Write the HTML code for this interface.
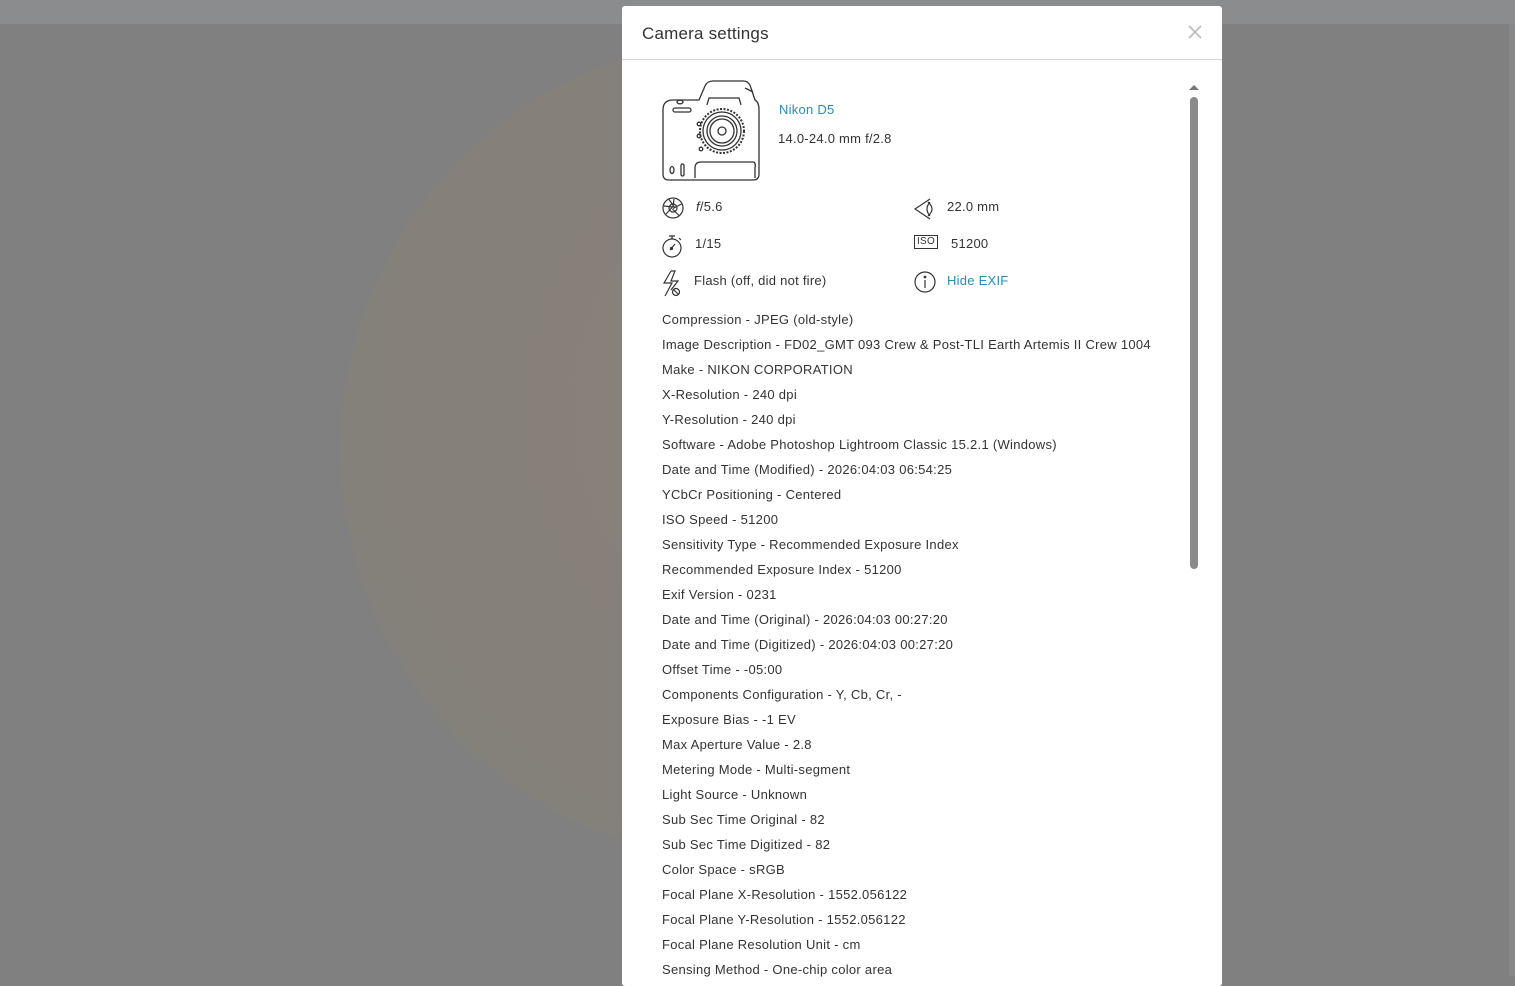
<!DOCTYPE html>
<html><head><meta charset="utf-8"><style>
html,body{margin:0;padding:0;width:1515px;height:976px;overflow:hidden;background:#808080;font-family:"Liberation Sans",sans-serif;}
.top{position:absolute;left:0;top:0;width:1515px;height:24px;background:#8b8c8d;}
.earth{position:absolute;left:340px;top:38px;width:824px;height:824px;border-radius:50%;background:radial-gradient(circle at 60% 45%,#8a827a 0%,#86807a 55%,#83807b 85%,#81807e 100%);}
.strip{position:absolute;left:1509px;top:24px;width:6px;height:952px;background:#888;}
.modal{position:absolute;left:622px;top:6px;width:600px;height:980px;background:#fff;border-radius:3px;}
.hdr{height:53px;border-bottom:1px solid #d6d6d6;position:relative;}
.hdr h1{margin:0;position:absolute;left:20px;top:18px;font-size:17px;font-weight:normal;color:#333;letter-spacing:0.2px;}
.x{position:absolute;left:565px;top:18px;}
.c{position:absolute;color:#333;font-size:13px;white-space:nowrap;letter-spacing:0.25px;}
.link{color:#2a8bb3;}
.sb{position:absolute;left:568px;top:91px;width:8px;height:472px;background:#8a8a8a;border-radius:4px;}
.arr{position:absolute;left:567px;top:79px;width:0;height:0;border-left:5px solid transparent;border-right:5px solid transparent;border-bottom:5px solid #777;}
.lines{position:absolute;left:40px;top:301px;font-size:13px;color:#333;line-height:25px;letter-spacing:0.29px;}
</style></head><body>
<div class="top"></div>
<div class="earth"></div>
<div class="strip"></div>
<div class="modal">
 <div class="hdr"><h1>Camera settings</h1>
  <svg class="x" width="16" height="16" viewBox="0 0 16 16"><path d="M2 2L14 14M14 2L2 14" stroke="#bbb" stroke-width="1.6"/></svg>
 </div>
 <div class="arr"></div><div class="sb"></div>
 <svg style="position:absolute;left:37px;top:72px" width="104" height="104" viewBox="0 0 104 104" fill="none" stroke="#333" stroke-width="1.3">
  <path d="M4 32 Q4 22 14 22 L40 22 L46 8 Q48 3 54 3 L84 3 Q90 3 92 10 L96 22 Q100 24 100 32 L100 96 Q100 102 94 102 L10 102 Q4 102 4 96 Z"/>
  <path d="M86 10 L94 14"/>
  <path d="M48 27 L50 20 L80 20 L82 27"/>
  <rect x="14" y="30" width="18" height="4" rx="2"/>
  <ellipse cx="21" cy="24" rx="3" ry="1.8"/>
  <circle cx="63" cy="53" r="22" stroke-dasharray="2 1.5" stroke-width="2"/>
  <circle cx="63" cy="53" r="19"/><circle cx="63" cy="53" r="15"/><circle cx="63" cy="53" r="12"/><circle cx="63" cy="53" r="4"/>
  <circle cx="40" cy="46" r="1.8"/><circle cx="40" cy="58" r="1.8"/><circle cx="42" cy="71" r="1.8"/>
  <path d="M36 100 L36 90 Q36 84 42 84 L94 84 Q97 84 96 90 L96 100"/>
  <ellipse cx="13" cy="92" rx="2" ry="3.5"/><rect x="22" y="86" width="3" height="12" rx="1.5"/>
 </svg>
 <div class="c link" style="left:157px;top:96px">Nikon D5</div>
 <div class="c" style="left:156px;top:125px">14.0-24.0 mm f/2.8</div>
 <svg style="position:absolute;left:40px;top:191px" width="22" height="22" viewBox="0 0 22 22" fill="none" stroke="#333" stroke-width="1.2"><circle cx="11" cy="11" r="10"/><path d="M7 2.5L13 11M19.5 7L11 11.5M17 18.5L10.5 12M4 17L10 10.5M2 9L11 10M12 2L11 10"/><circle cx="11" cy="11" r="4"/></svg>
 <div class="c" style="left:74px;top:193px"><i>f</i>/5.6</div>
 <svg style="position:absolute;left:40px;top:228px" width="22" height="24" viewBox="0 0 22 24" fill="none" stroke="#333" stroke-width="1.2"><circle cx="10" cy="14" r="9"/><path d="M7 2H13M10 2V5M17 4L19 6M8 16L13 10"/><circle cx="9.5" cy="14.5" r="1"/></svg>
 <div class="c" style="left:73px;top:230px">1/15</div>
 <svg style="position:absolute;left:39px;top:264px" width="24" height="28" viewBox="0 0 24 28" fill="none" stroke="#333" stroke-width="1.2"><path d="M10 1L3 13H11L4 26M10 1H14L10 11H17L10 20"/><circle cx="15" cy="22" r="3.5"/><path d="M12.5 19.5L17.5 24.5"/></svg>
 <div class="c" style="left:72px;top:267px">Flash (off, did not fire)</div>
 <svg style="position:absolute;left:292px;top:192px" width="24" height="24" viewBox="0 0 24 24" fill="none" stroke="#333" stroke-width="1.2"><path d="M16 1L1 11L16 21"/><path d="M14 4Q22 11 14 18"/><path d="M16 4Q10 11 16 18"/></svg>
 <div class="c" style="left:325px;top:193px">22.0 mm</div>
 <div class="c" style="left:292px;top:229px;border:1px solid #333;font-size:10px;line-height:12px;padding:0 2px;">ISO</div>
 <div class="c" style="left:329px;top:230px">51200</div>
 <svg style="position:absolute;left:292px;top:265px" width="22" height="22" viewBox="0 0 22 22" fill="none" stroke="#333" stroke-width="1.2"><circle cx="11" cy="11" r="10"/><path d="M11 9V17"/><circle cx="11" cy="6" r="0.8" fill="#333"/></svg>
 <div class="c link" style="left:325px;top:267px">Hide EXIF</div>
 <div class="lines">
Compression - JPEG (old-style)<br>
Image Description - FD02_GMT 093 Crew &amp; Post-TLI Earth Artemis II Crew 1004<br>
Make - NIKON CORPORATION<br>
X-Resolution - 240 dpi<br>
Y-Resolution - 240 dpi<br>
Software - Adobe Photoshop Lightroom Classic 15.2.1 (Windows)<br>
Date and Time (Modified) - 2026:04:03 06:54:25<br>
YCbCr Positioning - Centered<br>
ISO Speed - 51200<br>
Sensitivity Type - Recommended Exposure Index<br>
Recommended Exposure Index - 51200<br>
Exif Version - 0231<br>
Date and Time (Original) - 2026:04:03 00:27:20<br>
Date and Time (Digitized) - 2026:04:03 00:27:20<br>
Offset Time - -05:00<br>
Components Configuration - Y, Cb, Cr, -<br>
Exposure Bias - -1 EV<br>
Max Aperture Value - 2.8<br>
Metering Mode - Multi-segment<br>
Light Source - Unknown<br>
Sub Sec Time Original - 82<br>
Sub Sec Time Digitized - 82<br>
Color Space - sRGB<br>
Focal Plane X-Resolution - 1552.056122<br>
Focal Plane Y-Resolution - 1552.056122<br>
Focal Plane Resolution Unit - cm<br>
Sensing Method - One-chip color area
 </div>
</div>
</body></html>
